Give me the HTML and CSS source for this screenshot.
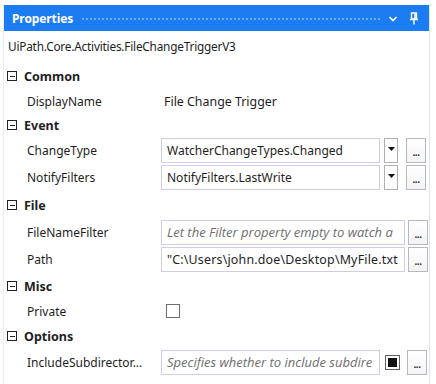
FILE: index.html
```html
<!DOCTYPE html>
<html>
<head>
<meta charset="utf-8">
<link rel="stylesheet" href="styles.css">
</head>
<body>
<div class="panel">
  <div class="titlebar">
    <span class="title">Properties</span>
    <span class="grip"></span>
    <svg class="chev" width="10" height="8" viewBox="0 0 10 8"><path d="M1.5 2 L5 5.5 L8.5 2" fill="none" stroke="#fff" stroke-width="1.6"/></svg>
    <svg class="pin" width="8" height="13" viewBox="0 0 8 13"><path d="M1.5 1 H6.5 V7 H1.5 Z M0 7.5 H8 M4 8 V12.5" fill="none" stroke="#fff" stroke-width="1.4"/><rect x="4.2" y="1.5" width="1.6" height="5.5" fill="#fff"/></svg>
  </div>
  <div class="typename">UiPath.Core.Activities.FileChangeTriggerV3</div>

  <div class="cat"><span class="toggle"></span>Common</div>
  <div class="row short"><span class="label">DisplayName</span><span class="plain">File Change Trigger</span></div>

  <div class="cat tight"><span class="toggle"></span>Event</div>
  <div class="row"><span class="label">ChangeType</span>
    <span class="field">WatcherChangeTypes.Changed</span>
    <span class="drop"><svg width="7" height="4" viewBox="0 0 7 4"><path d="M0 0 H7 L3.5 4 Z" fill="#111"/></svg></span>
    <span class="dots">...</span></div>
  <div class="row"><span class="label">NotifyFilters</span>
    <span class="field">NotifyFilters.LastWrite</span>
    <span class="drop"><svg width="7" height="4" viewBox="0 0 7 4"><path d="M0 0 H7 L3.5 4 Z" fill="#111"/></svg></span>
    <span class="dots">...</span></div>

  <div class="cat loose"><span class="toggle"></span>File</div>
  <div class="row"><span class="label">FileNameFilter</span>
    <span class="field wide ph">Let the Filter property empty to watch a</span>
    <span class="dots">...</span></div>
  <div class="row"><span class="label">Path</span>
    <span class="field wide path">"C:\Users\john.doe\Desktop\MyFile.txt</span>
    <span class="dots">...</span></div>

  <div class="cat"><span class="toggle"></span>Misc</div>
  <div class="row short"><span class="label">Private</span><span class="check"></span></div>

  <div class="cat"><span class="toggle"></span>Options</div>
  <div class="row"><span class="label">IncludeSubdirector...</span>
    <span class="field ph">Specifies whether to include subdire</span>
    <span class="box"><span class="fill"></span></span>
    <span class="dots">...</span></div>
</div>
</body>
</html>
```

FILE: styles.css
```css
html, body {
  margin: 0;
  padding: 0;
  background: #ffffff;
}
body {
  font-family: "Noto Sans", "Open Sans", sans-serif;
  font-size: 12px;
  color: #1e1e1e;
}
.panel {
  margin: 5px 0 0 3px;
  width: 427px;
  height: 379px;
  border-right: 1px solid #e2e2ea;
  border-left: 1px solid #ececf2;
  box-sizing: border-box;
  overflow: hidden;
}
.titlebar {
  height: 26px;
  background: #1c7cf2;
  display: flex;
  align-items: center;
  padding: 0 11px 0 8px;
  color: #fff;
}
.title {
  font-weight: bold;
  font-size: 12px;
  letter-spacing: -0.1px;
}
.grip {
  flex: 1;
  height: 4px;
  margin: 1px 8px 0 8px;
  background-image: radial-gradient(circle, rgba(255,255,255,0.38) 0.8px, transparent 1px);
  background-size: 4px 4px;
}
.chev { margin-right: 12px; margin-top: 2px; }
.typename {
  height: 32px;
  line-height: 30px;
  padding-left: 4px;
  font-size: 11.8px;
  letter-spacing: -0.2px;
}
.cat {
  height: 26px;
  display: flex;
  align-items: center;
  font-weight: bold;
  font-size: 12.5px;
  padding-left: 3px;
}
.cat.tight { height: 24px; }
.cat.loose { height: 28px; }
.toggle {
  width: 8px;
  height: 8px;
  border: 1px solid #222;
  margin-right: 7px;
  position: relative;
}
.toggle::after {
  content: "";
  position: absolute;
  left: 1.5px;
  right: 1.5px;
  top: 3.5px;
  height: 1px;
  background: #222;
}
.row {
  height: 27px;
  display: flex;
  align-items: center;
}
.row.short { height: 24px; }
.label {
  width: 134px;
  padding-left: 23px;
  flex: none;
  white-space: nowrap;
}
.plain { padding-left: 3px; font-size: 12.4px; }
.field {
  width: 219px;
  height: 25px;
  box-sizing: border-box;
  border: 1px solid #cdcde8;
  padding: 0 0 0 5px;
  line-height: 23px;
  white-space: nowrap;
  overflow: hidden;
  flex: none;
  font-size: 12px;
}
.field.wide { width: 244px; }
.field.path { font-size: 12.4px; letter-spacing: 0.2px; }
.ph {
  font-family: "Open Sans", "Noto Sans", sans-serif;
  font-style: italic;
  font-size: 13px;
  color: #6e6e6e;
}
.drop {
  width: 14px;
  height: 25px;
  box-sizing: border-box;
  border: 1px solid #b0b0b8;
  margin-left: 4px;
  display: flex;
  justify-content: center;
  padding-top: 8px;
  flex: none;
}
.drop svg { display: block; }
.dots {
  width: 20px;
  height: 25px;
  box-sizing: border-box;
  border: 1px solid #b8b8c4;
  margin-left: 8px;
  text-align: center;
  line-height: 26px;
  font-size: 10px;
  font-weight: bold;
  color: #333;
  letter-spacing: -0.5px;
  flex: none;
  background: linear-gradient(#ffffff, #f4f4f4);
}
.field.wide + .dots { margin-left: 3px; }
.check {
  width: 14px;
  height: 14px;
  box-sizing: border-box;
  border: 1px solid #6e6e78;
  margin-left: 5px;
}
.box {
  width: 15px;
  height: 15px;
  box-sizing: border-box;
  border: 1px solid #5e5e66;
  margin-left: 5px;
  padding: 2px;
  flex: none;
}
.fill {
  display: block;
  width: 100%;
  height: 100%;
  background: #111;
}
.box + .dots { margin-left: 7px; }
```
